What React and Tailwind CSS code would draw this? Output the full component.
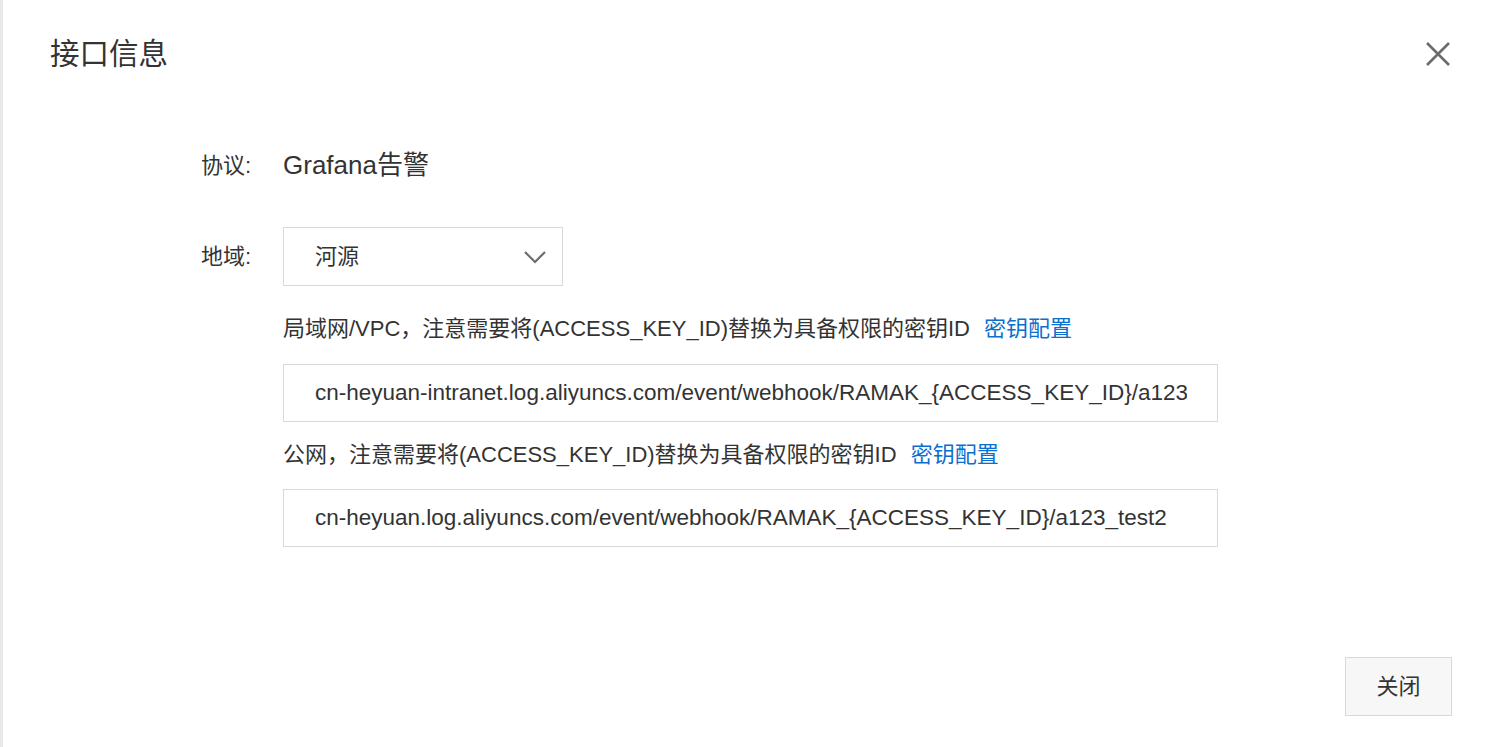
export default function App() {
  const font = { fontFamily: '"Liberation Sans", "Noto Sans CJK SC", sans-serif' };
  return (
    <div className="w-[1500px] h-[747px] bg-white flex overflow-hidden text-[#333]" style={font}>
      <div className="w-[3px] h-full bg-[#e9e9e9]" />
      <div className="flex-1 flex flex-col">
        <div className="h-[108px] flex items-center justify-between pl-[47px] pr-[49px]">
          <div className="text-[29.5px] leading-none text-[#333]">接口信息</div>
          <svg width="26" height="26" viewBox="0 0 26 26">
            <path d="M2 2 L24 24 M24 2 L2 24" stroke="#6b6b6b" strokeWidth="2.6" fill="none" />
          </svg>
        </div>

        <div className="pl-[198px]">
          <div className="mt-[27px] h-[60px] flex items-center">
            <div className="w-[82px] text-[22px] text-[#333]">协议:</div>
            <div className="text-[26px] text-[#333]">Grafana告警</div>
          </div>

          <div className="mt-[32px] h-[59px] flex items-center">
            <div className="w-[82px] text-[22px] text-[#333]">地域:</div>
            <div className="w-[280px] h-[59px] border border-[#d9d9d9] flex items-center justify-between pl-[31px] pr-[15px]">
              <span className="text-[22px] text-[#333]">河源</span>
              <svg width="24" height="14" viewBox="0 0 24 14">
                <path d="M2 2 L12 12 L22 2" stroke="#6e6e6e" strokeWidth="2.2" fill="none" />
              </svg>
            </div>
          </div>

          <div className="ml-[82px]">
            <div className="mt-[27px] h-[30px] flex items-center text-[22px] whitespace-nowrap">
              <span className="text-[#333]">局域网/VPC，注意需要将(ACCESS_KEY_ID)替换为具备权限的密钥ID</span>
              <span className="ml-[14px] text-[#0b6fd0]">密钥配置</span>
            </div>
            <div className="mt-[21px] w-[935px] h-[58px] border border-[#d9d9d9] flex items-center pl-[31px] pr-[30px] overflow-hidden">
              <div className="text-[22.5px] text-[#333] whitespace-nowrap overflow-hidden">
                cn-heyuan-intranet.log.aliyuncs.com/event/webhook/RAMAK_{'{'}ACCESS_KEY_ID{'}'}/a123_test2
              </div>
            </div>

            <div className="mt-[17px] h-[30px] flex items-center text-[22px] whitespace-nowrap">
              <span className="text-[#333]">公网，注意需要将(ACCESS_KEY_ID)替换为具备权限的密钥ID</span>
              <span className="ml-[14px] text-[#0b6fd0]">密钥配置</span>
            </div>
            <div className="mt-[20px] w-[935px] h-[58px] border border-[#d9d9d9] flex items-center pl-[31px] pr-[30px] overflow-hidden">
              <div className="text-[22.5px] text-[#333] whitespace-nowrap overflow-hidden">
                cn-heyuan.log.aliyuncs.com/event/webhook/RAMAK_{'{'}ACCESS_KEY_ID{'}'}/a123_test2
              </div>
            </div>
          </div>
        </div>

        <div className="mt-[110px] flex justify-end pr-[48px]">
          <div className="w-[107px] h-[59px] border border-[#d9d9d9] bg-[#f7f7f7] flex items-center justify-center text-[22px] text-[#333]">
            关闭
          </div>
        </div>
      </div>
    </div>
  );
}
